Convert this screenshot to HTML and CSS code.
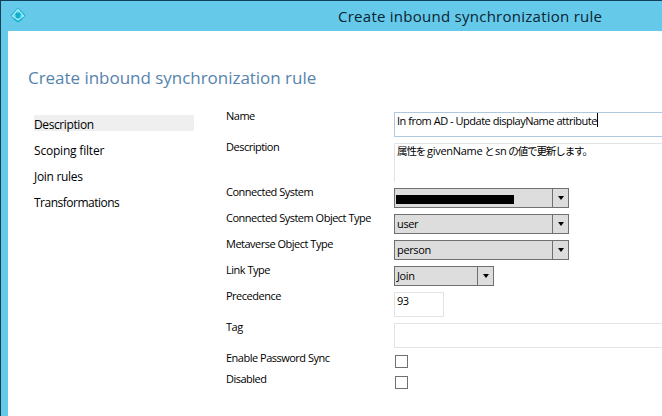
FILE: index.html
```html
<!DOCTYPE html>
<html lang="en">
<head>
<meta charset="utf-8">
<title>Create inbound synchronization rule</title>
<link rel="stylesheet" href="styles.css">
</head>
<body>
<div class="window">
  <header class="titlebar">
    <svg class="app-icon" width="16" height="16" viewBox="0 0 16 16">
      <path d="M8 .5 15.5 8.5 11 13.5 8 15.5 5 13.5.5 8.5Z" fill="#12add2"/>
      <path d="M8 2.5 2.5 9 8 13 13.5 9Z" fill="none" stroke="#a5f0f5" stroke-width="1.3"/>
      <path d="M8 2.5V6M2.5 9H6M13.5 9H10M8 13v-2" fill="none" stroke="#a5f0f5" stroke-width="1"/>
    </svg>
    <span class="window-title">Create inbound synchronization rule</span>
  </header>
  <main class="client">
    <h1 class="heading">Create inbound synchronization rule</h1>
    <div class="columns">
      <nav class="nav">
        <a class="nav-item selected">Description</a>
        <a class="nav-item">Scoping filter</a>
        <a class="nav-item">Join rules</a>
        <a class="nav-item">Transformations</a>
      </nav>
      <form class="form">
        <label>Name</label>
        <div class="text focused"><span>In from AD - Update displayName attribute</span><i class="caret"></i></div>
        <label>Description</label>
        <div class="text area"><p><span lang="ja">属性を</span> givenName <span lang="ja">と</span> sn <span lang="ja">の値で更新します。</span></p></div>
        <label>Connected System</label>
        <div class="select"><span class="value"><i class="redacted"></i></span><span class="drop"></span></div>
        <label>Connected System Object Type</label>
        <div class="select"><span class="value">user</span><span class="drop"></span></div>
        <label>Metaverse Object Type</label>
        <div class="select"><span class="value">person</span><span class="drop"></span></div>
        <label>Link Type</label>
        <div class="select short"><span class="value">Join</span><span class="drop"></span></div>
        <label>Precedence</label>
        <div class="text number">93</div>
        <label>Tag</label>
        <div class="text"></div>
        <label>Enable Password Sync</label>
        <div class="check"></div>
        <label>Disabled</label>
        <div class="check"></div>
      </form>
    </div>
  </main>
</div>
</body>
</html>
```
FILE: styles.css
```css
* { box-sizing: border-box; }
body {
  margin: 0;
  overflow: hidden;
  font-family: "Open Sans", "Noto Sans CJK JP", sans-serif;
  font-size: 11px;
  color: #000;
}
.window {
  width: 662px;
  height: 416px;
  display: flex;
  flex-direction: column;
  background: #65c9ea;
  border-top: 1px solid #10405a;
  border-left: 1px solid #10405a;
}
.titlebar {
  height: 30px;
  flex: none;
  display: flex;
  align-items: center;
  padding-left: 9px;
}
.app-icon {
  flex: none;
  margin-top: -2px;
}
.window-title {
  margin-left: 312px;
  font-size: 15px;
  line-height: 20px;
  letter-spacing: .26px;
  white-space: nowrap;
  color: #0b2431;
}
.client {
  flex: 1;
  margin-left: 7px;
  padding-left: 20px;
  background: #fff;
}
.heading {
  margin: 33px 0 0;
  height: 28px;
  font-size: 17px;
  line-height: 28px;
  font-weight: 400;
  letter-spacing: -.03px;
  color: #5683ae;
  white-space: nowrap;
}
.columns {
  display: flex;
  padding-top: 20px;
}
.nav {
  width: 160px;
  margin: 3px 32px 0 6px;
  display: flex;
  flex-direction: column;
  gap: 10px;
}
.nav-item {
  height: 16px;
  padding-top: 1px;
  line-height: 17px;
  font-size: 12px;
  letter-spacing: -.4px;
  white-space: nowrap;
}
.nav-item:nth-child(2) { letter-spacing: -.2px; }
.nav-item:nth-child(3) { letter-spacing: -.3px; }
.nav-item:nth-child(4) { letter-spacing: -.5px; }
.selected { background: #efefef; }
.form {
  flex: 1;
  min-width: 0;
  display: grid;
  grid-template-columns: 168px 1fr;
  grid-template-rows: 25px 39px repeat(4, 20px) 25px 25px 15px 15px;
  row-gap: 6px;
}
label {
  margin-top: -4px;
  height: 15px;
  line-height: 15px;
  white-space: nowrap;
  letter-spacing: -.5px;
}
.text {
  border: 1px solid #e1e3e6;
  border-right: 0;
  padding-left: 2px;
  line-height: 15px;
  letter-spacing: -.48px;
  white-space: nowrap;
  display: flex;
}
.focused { border-color: #afc8dd; }
.area { border-bottom: 0; line-height: 14px; }
.area p {
  margin: 0;
  letter-spacing: -.3px;
  word-spacing: -.7px;
}
.area [lang="ja"] {
  font-size: 10.5px;
  letter-spacing: -1.1px;
}
.area [lang="ja"]:nth-child(2) { letter-spacing: -1.5px; }
.number {
  width: 50px;
  border-right: 1px solid #e1e3e6;
}
.caret {
  width: 1px;
  height: 14px;
  background: #000;
}
.select {
  width: 175px;
  display: flex;
  border: 1px solid #707070;
  background: #ddd;
}
.short { width: 100px; }
.value {
  flex: 1;
  padding-left: 2px;
  line-height: 18px;
  letter-spacing: -.35px;
}
.redacted {
  display: block;
  width: 118px;
  height: 9px;
  margin: 6px 0 0 -1px;
  background: #000;
}
.drop {
  width: 16px;
  border-left: 1px solid #707070;
  display: flex;
  align-items: center;
  justify-content: center;
}
.drop::before {
  content: "";
  border: 3.5px solid transparent;
  border-top: 4px solid #000;
  border-bottom: 0;
}
.check {
  width: 13px;
  height: 13px;
  margin: 1px 0 0 1px;
  border: 1px solid #707070;
}
```
